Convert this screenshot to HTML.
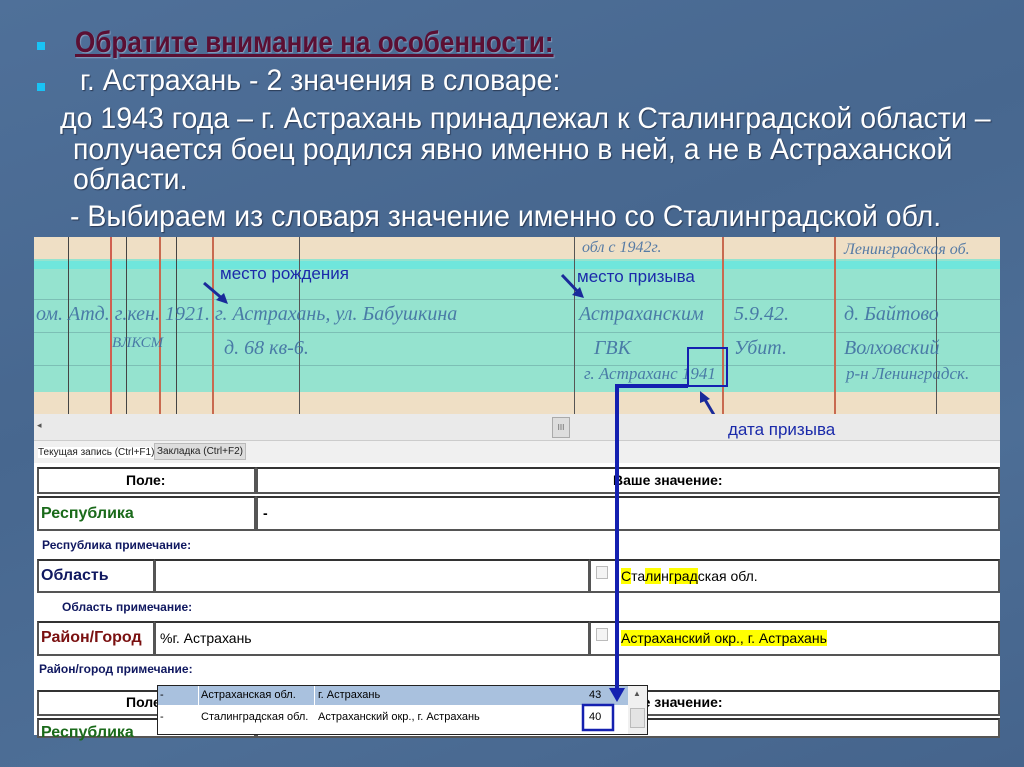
<!DOCTYPE html>
<html><head><meta charset="utf-8"><style>
*{margin:0;padding:0;box-sizing:border-box}
body{width:1024px;height:767px;overflow:hidden;position:relative;background:#4a6b93;background-image:linear-gradient(160deg,#4f7099 0%,#47678f 40%,#4d6e96 70%,#45648c 100%);font-family:"Liberation Sans",sans-serif}
.t{position:absolute;color:#fff;font-size:30px;white-space:nowrap;text-shadow:1px 1px 1px #2a3a55;transform:scaleX(0.95);transform-origin:left}
.b{position:absolute;width:8px;height:8px;background:#19c3f5;left:37px}
.a{position:absolute;font-family:"Liberation Sans",sans-serif;white-space:nowrap}
.cell{position:absolute;background:#fff;border:2px solid #555;border-top-color:#333}
.lbl{position:absolute;font-family:"Liberation Sans",sans-serif;font-weight:bold;white-space:nowrap}
.hw{position:absolute;font-family:"Liberation Serif",serif;font-style:italic;color:#3c6aa0;font-size:20px;white-space:nowrap;opacity:.85}
</style></head><body>
<div class="b" style="top:42px"></div>
<div class="t" style="left:75px;top:26px;color:#5b0f33;font-weight:bold;text-decoration:underline;text-shadow:1px 1px 1px #8aa0c0;transform:scaleX(0.87)">Обратите внимание на особенности:</div>
<div class="b" style="top:83px"></div>
<div class="t" style="left:80px;top:64px">г. Астрахань - 2 значения в словаре:</div>
<div class="t" style="left:60px;top:102px">до 1943 года – г. Астрахань принадлежал к Сталинградской области –</div>
<div class="t" style="left:73px;top:133px">получается боец родился явно именно в ней, а не в Астраханской</div>
<div class="t" style="left:73px;top:163px">области.</div>
<div class="t" style="left:70px;top:200px">- Выбираем из словаря значение именно со Сталинградской обл.</div>

<!-- document -->
<div style="position:absolute;left:34px;top:237px;width:966px;height:177px;background:#efdfc5;overflow:hidden">
 <div style="position:absolute;left:0;top:22px;width:966px;height:133px;background:#95e3cf"></div>
 <div style="position:absolute;left:0;top:24px;width:966px;height:8px;background:#6fe6dc"></div>
 <div style="position:absolute;left:0;top:62px;width:966px;height:1px;background:#7cbfb5"></div>
 <div style="position:absolute;left:0;top:95px;width:966px;height:1px;background:#7cbfb5"></div>
 <div style="position:absolute;left:0;top:128px;width:966px;height:1px;background:#7cbfb5"></div>
 <div style="position:absolute;left:34px;top:0;width:1px;height:177px;background:#444"></div>
 <div style="position:absolute;left:76px;top:0;width:2px;height:177px;background:#d06050"></div>
 <div style="position:absolute;left:92px;top:0;width:1px;height:177px;background:#444"></div>
 <div style="position:absolute;left:125px;top:0;width:2px;height:177px;background:#c86a50"></div>
 <div style="position:absolute;left:142px;top:0;width:1px;height:177px;background:#444"></div>
 <div style="position:absolute;left:178px;top:0;width:2px;height:177px;background:#c86a50"></div>
 <div style="position:absolute;left:265px;top:0;width:1px;height:177px;background:#555"></div>
 <div style="position:absolute;left:540px;top:0;width:1px;height:177px;background:#555"></div>
 <div style="position:absolute;left:688px;top:0;width:2px;height:177px;background:#c86a50"></div>
 <div style="position:absolute;left:800px;top:0;width:2px;height:177px;background:#c86a50"></div>
 <div style="position:absolute;left:902px;top:0;width:1px;height:177px;background:#555"></div>
 <div class="hw" style="left:2px;top:66px">ом. Атд. г.кен. 1921. г. Астрахань, ул. Бабушкина</div>
 <div class="hw" style="left:78px;top:98px;font-size:15px">ВЛКСМ</div>
 <div class="hw" style="left:190px;top:100px">д. 68 кв-6.</div>
 <div class="hw" style="left:548px;top:2px;font-size:16px">обл с 1942г.</div>
 <div class="hw" style="left:545px;top:66px">Астраханским</div>
 <div class="hw" style="left:700px;top:66px">5.9.42.</div>
 <div class="hw" style="left:810px;top:66px">д. Байтово</div>
 <div class="hw" style="left:560px;top:100px">ГВК</div>
 <div class="hw" style="left:700px;top:100px">Убит.</div>
 <div class="hw" style="left:810px;top:100px">Волховский</div>
 <div class="hw" style="left:550px;top:127px;font-size:17px">г. Астраханс 1941</div>
 <div class="hw" style="left:812px;top:127px;font-size:17px">р-н Ленинградск.</div>
 <div class="hw" style="left:810px;top:4px;font-size:16px">Ленинградская об.</div>
 <div class="a" style="left:186px;top:27px;font-size:17px;color:#1a2aaa">место рождения</div>
 <div class="a" style="left:543px;top:30px;font-size:17px;color:#1a2aaa">место призыва</div>
</div>
<svg style="position:absolute;left:0;top:0" width="1024" height="767">
 <g stroke="#1a2a9a" stroke-width="3" fill="#1a2a9a">
  <line x1="204" y1="283" x2="224" y2="300"/><polygon points="228,304 216,300 224,293" stroke="none"/>
  <line x1="562" y1="275" x2="580" y2="294"/><polygon points="584,298 572,295 580,287" stroke="none"/>
  <line x1="717" y1="420" x2="704" y2="398"/><polygon points="700,391 710,399 700,403" stroke="none"/>
 </g>
 <rect x="688" y="348" width="39" height="38" fill="none" stroke="#1420b0" stroke-width="2"/>
</svg>
<!-- scrollbar -->
<div style="position:absolute;left:34px;top:414px;width:966px;height:27px;background:#eaeaea;border-bottom:1px solid #ccc"></div>
<div class="a" style="left:37px;top:420px;font-size:9px;color:#555">◂</div>
<div style="position:absolute;left:552px;top:417px;width:18px;height:21px;background:#ddd;border:1px solid #aaa;font-size:8px;color:#666;text-align:center;line-height:19px;font-family:'Liberation Sans'">III</div>
<div class="a" style="left:728px;top:420px;font-size:17px;color:#1a2aaa">дата призыва</div>
<!-- form -->
<div style="position:absolute;left:34px;top:441px;width:966px;height:294px;background:#fff"></div>
<div style="position:absolute;left:34px;top:441px;width:966px;height:22px;background:#f0f0f0"></div>
<div class="a" style="left:38px;top:447px;font-size:10px;color:#222;background:#fff">Текущая запись (Ctrl+F1)</div>
<div class="a" style="left:154px;top:443px;font-size:10px;color:#222;background:#ddd;border:1px solid #bbb;padding:2px 2px">Закладка (Ctrl+F2)</div>
<div class="cell" style="left:37px;top:467px;width:219px;height:27px"></div>
<div class="cell" style="left:256px;top:467px;width:744px;height:27px"></div>
<div class="lbl" style="left:126px;top:472px;font-size:14px">Поле:</div>
<div class="lbl" style="left:613px;top:472px;font-size:14px">Ваше значение:</div>
<div class="cell" style="left:37px;top:496px;width:219px;height:35px"></div>
<div class="cell" style="left:256px;top:496px;width:744px;height:35px"></div>
<div class="lbl" style="left:41px;top:505px;font-size:16px;color:#1a6a1a">Республика</div>
<div class="lbl" style="left:263px;top:505px;font-size:14px">-</div>
<div class="lbl" style="left:42px;top:538px;font-size:12px;color:#101860">Республика примечание:</div>
<div class="cell" style="left:37px;top:559px;width:118px;height:34px"></div>
<div class="cell" style="left:154px;top:559px;width:436px;height:34px"></div>
<div class="cell" style="left:589px;top:559px;width:28px;height:34px"></div>
<div class="cell" style="left:616px;top:559px;width:384px;height:34px"></div>
<div class="lbl" style="left:41px;top:567px;font-size:16px;color:#101860">Область</div>
<div style="position:absolute;left:596px;top:566px;width:12px;height:13px;border:1px solid #bbb;background:#f4f4f4"></div>
<div class="a" style="left:621px;top:568px;font-size:14px"><span style="background:#ff0">С</span>та<span style="background:#ff0">ли</span>н<span style="background:#ff0">град</span>ская обл.</div>
<div class="lbl" style="left:62px;top:600px;font-size:12px;color:#101860">Область примечание:</div>
<div class="cell" style="left:37px;top:621px;width:118px;height:35px"></div>
<div class="cell" style="left:154px;top:621px;width:436px;height:35px"></div>
<div class="cell" style="left:589px;top:621px;width:28px;height:35px"></div>
<div class="cell" style="left:616px;top:621px;width:384px;height:35px"></div>
<div class="lbl" style="left:41px;top:629px;font-size:16px;color:#7a1010">Район/Город</div>
<div class="a" style="left:160px;top:630px;font-size:14px">%г. Астрахань</div>
<div style="position:absolute;left:596px;top:628px;width:12px;height:13px;border:1px solid #bbb;background:#f4f4f4"></div>
<div class="a" style="left:621px;top:630px;font-size:14px;background:#ff0">Астраханский окр., г. Астрахань</div>
<div class="lbl" style="left:39px;top:662px;font-size:12px;color:#101860">Район/город примечание:</div>
<div class="cell" style="left:37px;top:690px;width:219px;height:26px"></div>
<div class="cell" style="left:256px;top:690px;width:744px;height:26px"></div>
<div class="lbl" style="left:126px;top:694px;font-size:14px">Поле:</div>
<div class="lbl" style="left:613px;top:694px;font-size:14px">Ваше значение:</div>
<div class="cell" style="left:37px;top:718px;width:219px;height:20px"></div>
<div class="cell" style="left:256px;top:718px;width:744px;height:20px"></div>
<div class="lbl" style="left:41px;top:724px;font-size:16px;color:#1a6a1a">Республика</div>
<!-- dropdown -->
<div style="position:absolute;left:157px;top:685px;width:491px;height:50px;background:#fff;border:1px solid #222;overflow:hidden;font-family:'Liberation Sans',sans-serif;font-size:11px">
 <div style="position:absolute;left:0;top:0;width:470px;height:19px;background:#a9c1de"></div>
 <div style="position:absolute;left:40px;top:0;width:1px;height:19px;background:#fff"></div>
 <div style="position:absolute;left:156px;top:0;width:1px;height:19px;background:#fff"></div>
 <div style="position:absolute;left:2px;top:3px">-</div><div style="position:absolute;left:43px;top:3px">Астраханская обл.</div><div style="position:absolute;left:160px;top:3px">г. Астрахань</div><div style="position:absolute;left:431px;top:3px">43</div>
 <div style="position:absolute;left:2px;top:25px">-</div><div style="position:absolute;left:43px;top:25px">Сталинградская обл.</div><div style="position:absolute;left:160px;top:25px">Астраханский окр., г. Астрахань</div><div style="position:absolute;left:431px;top:25px">40</div>
 <div style="position:absolute;left:470px;top:0;width:20px;height:50px;background:#f0f0f0"></div>
 <div style="position:absolute;left:475px;top:3px;font-size:8px;color:#555">▲</div>
 <div style="position:absolute;left:472px;top:22px;width:15px;height:20px;background:#e4e4e4;border:1px solid #bbb"></div>
</div>
<svg style="position:absolute;left:0;top:0" width="1024" height="767">
 <polyline points="688,386 617,386 617,690" fill="none" stroke="#1420b0" stroke-width="4"/>
 <polygon points="609,688 625,688 617,702" fill="#1420b0"/>
 <rect x="583" y="705" width="30" height="25" fill="none" stroke="#1420b0" stroke-width="2.5"/>
</svg>
</body></html>
